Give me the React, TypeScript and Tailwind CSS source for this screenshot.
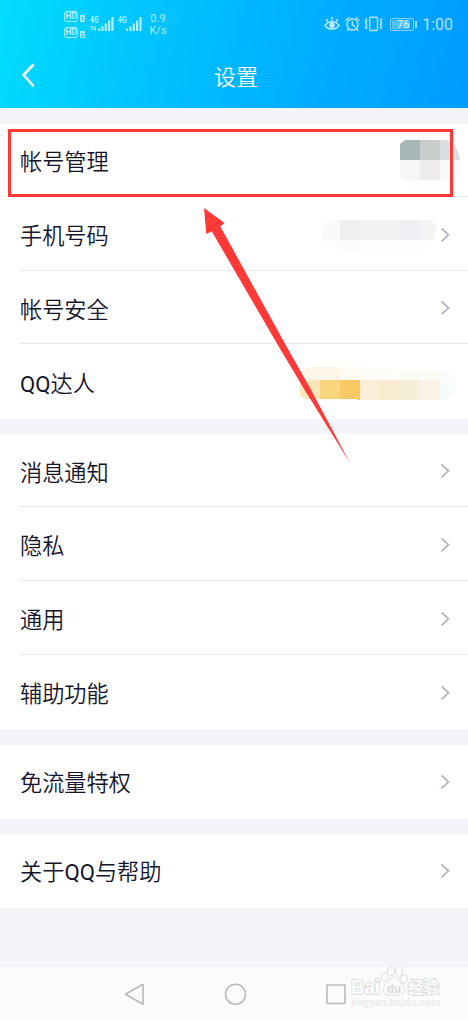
import { ReactNode } from 'react';

type Item = {
  label: string;
  arrow?: boolean;
};

const groups: Item[][] = [
  [
    { label: '帐号管理', arrow: false },
    { label: '手机号码' },
    { label: '帐号安全' },
    { label: 'QQ达人', arrow: false },
  ],
  [{ label: '消息通知' }, { label: '隐私' }, { label: '通用' }, { label: '辅助功能' }],
  [{ label: '免流量特权' }],
  [{ label: '关于QQ与帮助' }],
];

// x, y, width, height, colour
type Cell = [number, number, number, number, string];

const avatarCells: Cell[] = [
  [400, 140, 20, 20, '#a7b6b6'],
  [420, 140, 20, 20, '#c7cccc'],
  [440, 140, 20, 20, '#d9dfe1'],
  [400, 160, 20, 20, '#f6f6f6'],
  [420, 160, 20, 20, '#efecee'],
  [440, 160, 20, 20, '#fafafb'],
  [400, 180, 60, 10, '#fdfdfd'],
];

const phoneCells: Cell[] = [
  [320, 220, 20, 20, '#fafafa'],
  [340, 220, 20, 20, '#f0f0f0'],
  [360, 220, 40, 20, '#f2f2f2'],
  [400, 220, 20, 20, '#eeeff2'],
  [420, 220, 17, 20, '#f5f5f5'],
  [320, 240, 20, 10, '#fdfdfd'],
  [340, 240, 20, 10, '#fbfbfb'],
  [360, 240, 77, 10, '#fefefe'],
];

const badgeCells: Cell[] = [
  [300, 366, 40, 14, '#fdf5e5'],
  [340, 366, 20, 14, '#fffbf3'],
  [360, 366, 40, 14, '#fefcf6'],
  [400, 366, 20, 14, '#fcfbf4'],
  [420, 366, 20, 14, '#fdfbf6'],
  [440, 366, 16, 14, '#fafbfa'],
  [300, 380, 20, 20, '#f9e6b8'],
  [320, 380, 20, 20, '#f9d580'],
  [340, 380, 20, 20, '#f9c966'],
  [360, 380, 20, 20, '#fbeed8'],
  [380, 380, 20, 20, '#f8ebcf'],
  [400, 380, 20, 20, '#f6eed9'],
  [420, 380, 20, 20, '#fbf3e8'],
  [440, 380, 16, 20, '#f9fbfa'],
];

function Cells({ cells, clip }: { cells: Cell[]; clip: string }) {
  return (
    <g clipPath={`url(#${clip})`} shapeRendering="crispEdges">
      {cells.map(([x, y, w, h, fill], i) => (
        <rect key={i} x={x} y={y} width={w} height={h} fill={fill} />
      ))}
    </g>
  );
}

function HdBadge({ n }: { n: string }) {
  return (
    <div className="flex h-[11px] items-end gap-[2px]">
      <span className="flex h-[11px] w-[14px] items-center justify-center rounded-[3px] border border-white/65 text-[8.500px] leading-none font-bold">
        HD
      </span>
      <span className="flex h-[7px] w-[5px] items-center justify-center rounded-[1px] bg-white/65 text-[6px] leading-none font-bold text-[#00c0ff]">
        {n}
      </span>
    </div>
  );
}

function Signal({ data }: { data?: boolean }) {
  return (
    <svg width="24" height="17" viewBox="0 0 24 17" fill="currentColor">
      <text x="0" y="7" fontSize="8.500" fontWeight="700" textLength="8.500" lengthAdjust="spacingAndGlyphs">
        4G
      </text>
      {data && <path d="M2 10v4M.8 11.500 2 10l1.200 1.500M5 10v4M3.800 12.500 5 14l1.200-1.500" fill="none" stroke="currentColor" strokeWidth="1" />}
      <path d="M8 12.500h2V15H8zM11.300 10.500h2.200V15h-2.200zM14.700 7.500h2.200V15h-2.200zM18 4.500h2.200V15H18zM21.400 1h2.200v14h-2.200z" />
    </svg>
  );
}

function StatusBar() {
  return (
    <div className="flex h-[46px] items-start justify-between pr-[15px] pl-16 text-white/70">
      <div className="flex pt-[11px]">
        <div className="flex w-[26px] flex-col gap-[5px]">
          <HdBadge n="1" />
          <HdBadge n="2" />
        </div>
        <div className="flex gap-[4px] pt-[5px]">
          <Signal data />
          <Signal />
        </div>
        <div className="ml-[7px] w-[18px] pt-[2px] text-center text-[11px] leading-[12px]">
          <div>0.9</div>
          <div>K/s</div>
        </div>
      </div>
      <div className="mt-[15px] flex h-[18px] items-center">
        <svg width="16" height="16" viewBox="0 0 16 16" fill="none" stroke="currentColor" strokeWidth="1.500" strokeLinecap="round">
          <path d="M1 9.500C4.500 4.500 11.500 4.500 15 9.500 11.500 14.300 4.500 14.300 1 9.500Z" />
          <circle cx="8" cy="9.300" r="2" fill="currentColor" />
          <path d="M8 1.500V4M2.500 3.500 3.700 5.300M13.500 3.500 12.300 5.300" />
        </svg>
        <svg className="ml-[5px]" width="15" height="16" viewBox="0 0 15 16" fill="none" stroke="currentColor" strokeWidth="1.400" strokeLinecap="round">
          <circle cx="7.500" cy="8.500" r="5.500" />
          <path d="M7.300 5.500v3.300l2.400 1.500M1 4.200 4 1.800M14 4.200 11 1.800M3.500 13 2.500 14.300M11.500 13l1 1.300" />
        </svg>
        <svg className="ml-[4px]" width="19" height="16" viewBox="0 0 19 16" fill="none" stroke="currentColor" strokeWidth="1.400">
          <rect x="5.700" y="1.200" width="7.800" height="13.300" rx="1" />
          <path d="M2.800 2.500 1.500 4l1.300 1.500L1.500 7l1.300 1.500L1.500 10l1.300 1.500L1.500 13M16.400 2.500 17.700 4l-1.300 1.500L17.700 7l-1.300 1.500 1.300 1.500-1.300 1.500 1.300 1.500" />
        </svg>
        <div className="ml-[7px] flex h-[13px] w-[24px] items-center rounded-[2px] border border-white/50 p-px">
          <div className="flex h-full w-[18px] items-center justify-center rounded-[1px] bg-white/30 pl-1 text-[11px] leading-none text-white/80">76</div>
        </div>
        <div className="ml-px h-[7px] w-[2px] bg-white/60" />
        <div className="ml-[5px] pt-0.5 text-base leading-none whitespace-nowrap">1:00</div>
      </div>
    </div>
  );
}

function Header() {
  return (
    <header className="h-[108px] bg-[linear-gradient(103deg,#00dcff_0%,#00c3ff_32%,#00b0ff_62%,#009cff_100%)]">
      <StatusBar />
      <div className="grid h-[60px] grid-cols-3 items-center px-5">
        <svg width="18" height="26" viewBox="0 0 18 26" fill="none" stroke="#fff" strokeWidth="2.600" strokeLinecap="round" strokeLinejoin="round">
          <path d="M13 2 3.500 12 13 22.500" />
        </svg>
        <h1 className="pt-1 pl-1 text-center text-[22px] leading-none font-[350] text-white">设置</h1>
      </div>
    </header>
  );
}

function Row({ item, last }: { item: Item; last: boolean }) {
  return (
    <div className="relative ml-5 flex h-[73.750px] items-center justify-between pr-[17px]">
      <span className="pt-[3px] text-[22.200px] leading-none font-[350] text-[#14142a]">
        {item.label.split(/(QQ)/).map((part, i) =>
          part === 'QQ' ? (
            <span key={i} className="font-normal">
              {part}
            </span>
          ) : (
            part
          ),
        )}
      </span>
      {item.arrow !== false && (
        <svg width="12" height="16" viewBox="0 0 12 16" fill="none" stroke="#b4b4c0" strokeWidth="1.800">
          <path d="M2.500 1.300 9.500 7.800l-7 6.500" />
        </svg>
      )}
      {!last && <div className="absolute inset-x-0 bottom-px h-px bg-[#ebebee]" />}
    </div>
  );
}

function Group({ children }: { children: ReactNode }) {
  return <section className="bg-white">{children}</section>;
}

function NavBar() {
  return (
    <nav className="h-[53px] bg-[#fcfcfc] pt-[14px] pl-[123px]">
      <svg width="224" height="26" viewBox="0 0 224 26" fill="none" stroke="#b9b9b9" strokeWidth="1.600" strokeLinejoin="round">
        <path d="M20 3.300v20L2.500 13.300Z" />
        <circle cx="112.500" cy="13.300" r="10" />
        <rect x="204" y="4" width="18" height="18.500" rx=".5" />
      </svg>
    </nav>
  );
}

function Watermark() {
  return (
    <svg className="absolute top-[960px] left-[345px]" width="105" height="52" viewBox="0 0 105 52">
      <g fill="#fcfcfc" stroke="#dfdfdf" strokeWidth="1">
        <ellipse cx="39.500" cy="17" rx="3.500" ry="4.500" transform="rotate(-15 39.500 17)" />
        <ellipse cx="46" cy="11" rx="3.400" ry="4.700" />
        <ellipse cx="54" cy="11.500" rx="3.400" ry="4.700" transform="rotate(10 54 11.500)" />
        <ellipse cx="59" cy="19" rx="3.500" ry="4.300" transform="rotate(20 59 19)" />
        <path d="M49 17c4 0 5 4 8 7s4 5 2.500 8-5 3-10.500 3-9 .5-10.500-3 0-5.500 3-8 4-7 7.500-7Z" />
        <g paintOrder="stroke" strokeWidth="2">
          <text x="6" y="34" fontSize="20" fontWeight="700" fontFamily="Liberation Sans, sans-serif" textLength="29" lengthAdjust="spacingAndGlyphs">Bai</text>
          <text x="42" y="32.500" fontSize="13" fontWeight="700" fontFamily="Liberation Sans, sans-serif" textLength="14" lengthAdjust="spacingAndGlyphs" fill="#d9d9d9" stroke="none">du</text>
          <text x="63" y="33" fontSize="15.500" fontWeight="700">经验</text>
          <text x="6" y="46" fontSize="10.500" fontWeight="700" fontFamily="Liberation Sans, sans-serif" fill="#ebebeb" stroke="none" textLength="89" lengthAdjust="spacingAndGlyphs">jingyan.baidu.com</text>
        </g>
      </g>
    </svg>
  );
}

function Annotations() {
  return (
    <svg className="pointer-events-none absolute inset-0" width="468" height="1020" viewBox="0 0 468 1020">
      <defs>
        <clipPath id="avatar">
          <path d="M405 140h42c7 2 11 9 13 20v6c-1 12-4 20-12 24h-22c-9-1-18-4-26-14v-32Z" />
        </clipPath>
        <clipPath id="phone">
          <path d="M333 220h96c5 1 7 5 7 11 0 10-5 15-14 19h-82c-11-1-18-6-18-15 0-8 4-14 11-15Z" />
        </clipPath>
        <clipPath id="badge">
          <path d="M308 367h52l30 3h50c10 1 16 7 16 15s-5 15-12 15h-87v-1h-52l-5-3v-24Z" />
        </clipPath>
      </defs>
      <Cells cells={avatarCells} clip="avatar" />
      <Cells cells={phoneCells} clip="phone" />
      <Cells cells={badgeCells} clip="badge" />
      <rect x="9.500" y="130.500" width="442" height="65" fill="none" stroke="#ff3838" strokeWidth="3" />
      <path d="M204 208 224.500 223l-4.200 3.500L285.700 345 310 388 350 463 305 390.500 277.800 345 211.700 231.200 206.300 234Z" fill="#ff3838" />
    </svg>
  );
}

export default function App() {
  return (
    <div className="relative flex h-[1020px] w-[468px] flex-col overflow-hidden bg-[#f4f5fa] font-[Roboto,'Noto_Sans_CJK_SC',sans-serif]">
      <Header />
      <main className="flex flex-1 flex-col gap-[15.400px] pt-4">
        {groups.map((items, i) => (
          <Group key={i}>
            {items.map((item, j) => (
              <Row key={item.label} item={item} last={j === items.length - 1} />
            ))}
          </Group>
        ))}
      </main>
      <NavBar />
      <Annotations />
      <Watermark />
    </div>
  );
}
